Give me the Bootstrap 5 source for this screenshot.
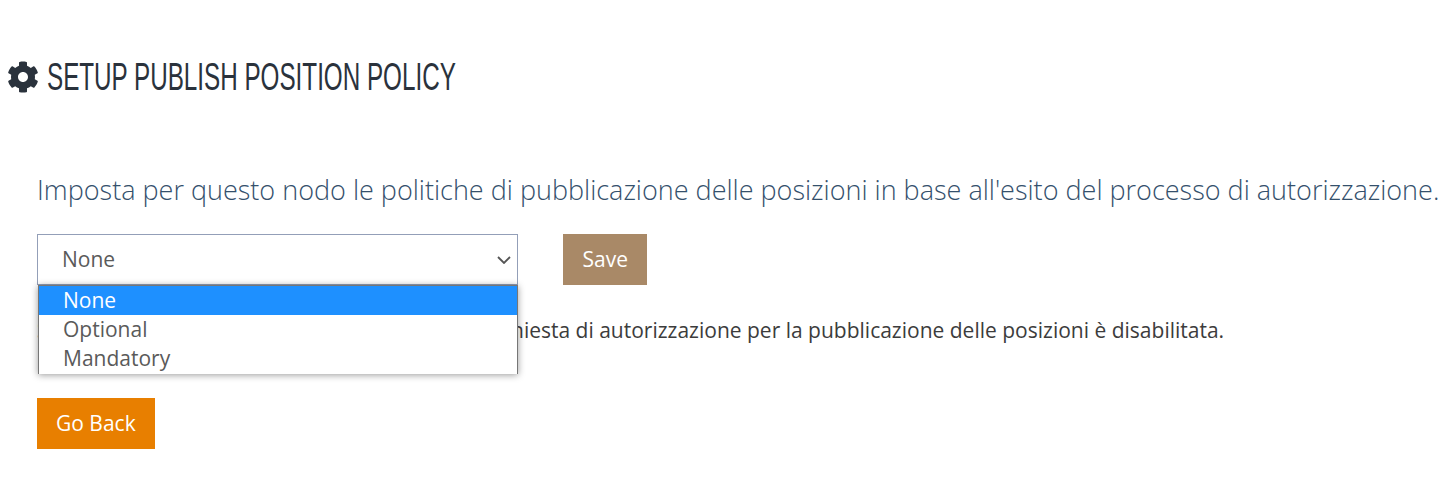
<!DOCTYPE html>
<html lang="it">
<head>
<meta charset="utf-8">
<title>Setup publish position policy</title>
<link href="https://cdn.jsdelivr.net/npm/bootstrap@5.3.0/dist/css/bootstrap.min.css" rel="stylesheet">
<style>
body{font-family:"Open Sans","Noto Sans",sans-serif;color:#3c3c3c;background:#fff;overflow:hidden}
.page-head{padding:55px 0 0 7px;margin-bottom:73px;color:#2a323c}
.page-head svg{width:32px;height:32px;flex:none}
.page-title{font-family:"Liberation Sans",sans-serif;font-size:38px;line-height:44px;font-weight:400;margin:0;text-transform:uppercase;white-space:nowrap;transform:scaleX(.6375);transform-origin:left center}
.page-body{padding:0 0 0 37px}
.intro{font-weight:300;font-size:27px;line-height:36px;color:#34506c;white-space:nowrap;margin:0 0 26px}
.picker{width:481px}
.picker .form-select{height:51px;border-radius:0;border:1px solid #939fb8;padding:0 24px;font-size:21px;color:#5a5a5a;background-image:url("data:image/svg+xml,%3csvg xmlns='http://www.w3.org/2000/svg' viewBox='0 0 14 8'%3e%3cpath fill='none' stroke='%23555' stroke-width='1.8' d='M1 1l6 6 6-6'/%3e%3c/svg%3e");background-position:right 6px center;background-size:14px 8px}
.opts{position:absolute;top:51px;left:1px;right:0;z-index:5;background:#fff;border:1px solid #767676;border-bottom:0;box-shadow:0 1px 7px rgba(0,0,0,.4);font-size:21px;line-height:29px;color:#5a5a5a;height:89px}
.opts div{padding:0 24px;height:29px}
.opts .on{background:#1e90ff;color:#fff}
.act{border-radius:0;border:0;height:51px;font-size:21px;color:#fff;padding:0 19.5px}
.act-save{background:#a98967;margin-left:45px}
.act-back{background:#e87f00;padding:0 19px}
.act:hover{color:#fff}
.note{font-size:21px;line-height:30px;color:#3c3c3c;margin:30px 0 53px;white-space:nowrap}
</style>
</head>
<body>
<div class="page-head d-flex align-items-center gap-2">
<svg viewBox="0 0 512 512" fill="currentColor" aria-hidden="true"><path d="M487.4 315.7l-42.6-24.6c4.3-23.2 4.3-47 0-70.2l42.6-24.6c4.9-2.8 7.1-8.6 5.5-14-11.1-35.6-30-67.8-54.7-94.6-3.8-4.1-10-5.1-14.8-2.3L380.8 110c-17.9-15.4-38.5-27.3-60.8-35.1V25.8c0-5.6-3.9-10.5-9.4-11.7-36.7-8.2-74.3-7.8-109.2 0-5.5 1.2-9.4 6.1-9.4 11.7V75c-22.2 7.9-42.8 19.8-60.8 35.1L88.7 85.5c-4.9-2.8-11-1.9-14.8 2.3-24.7 26.7-43.6 58.9-54.7 94.6-1.7 5.4.6 11.2 5.5 14L67.3 221c-4.3 23.2-4.3 47 0 70.2l-42.6 24.6c-4.9 2.8-7.1 8.6-5.5 14 11.1 35.6 30 67.8 54.7 94.6 3.8 4.1 10 5.1 14.8 2.3l42.6-24.6c17.9 15.4 38.5 27.3 60.8 35.1v49.2c0 5.6 3.9 10.5 9.4 11.7 36.7 8.2 74.3 7.8 109.2 0 5.5-1.2 9.4-6.1 9.4-11.7v-49.2c22.2-7.9 42.8-19.8 60.8-35.1l42.6 24.6c4.9 2.8 11 1.9 14.8-2.3 24.7-26.7 43.6-58.9 54.7-94.6 1.5-5.5-.7-11.3-5.6-14.1zM256 336c-44.1 0-80-35.9-80-80s35.9-80 80-80 80 35.9 80 80-35.9 80-80 80z"/></svg>
<h1 class="page-title">Setup publish position policy</h1>
</div>
<main class="page-body">
<p class="intro">Imposta per questo nodo le politiche di pubblicazione delle posizioni in base all'esito del processo di autorizzazione.</p>
<div class="d-flex align-items-start">
<div class="picker position-relative">
<select class="form-select" aria-label="Policy"><option>None</option></select>
<div class="opts"><div class="on">None</div><div>Optional</div><div>Mandatory</div></div>
</div>
<button type="button" class="btn act act-save">Save</button>
</div>
<p class="note">Selezionando None, per tutto questo nodo, la richiesta di autorizzazione per la pubblicazione delle posizioni è disabilitata.</p>
<button type="button" class="btn act act-back">Go Back</button>
</main>
<script src="https://cdn.jsdelivr.net/npm/bootstrap@5.3.0/dist/js/bootstrap.bundle.min.js"></script>
</body>
</html>
